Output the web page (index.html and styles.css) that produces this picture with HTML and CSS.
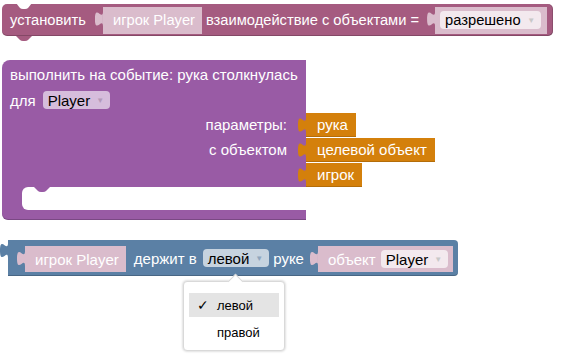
FILE: index.html
```html
<!DOCTYPE html>
<html lang="ru">
<head>
  <meta charset="UTF-8" />
  <title>Blockly workspace</title>
  <meta name="viewport" content="width=device-width, initial-scale=1.0"/>
  <link rel="stylesheet" href="styles.css">
</head>
<body>
  <div class="workspace">

    <div class="block set-block">
      <span class="label first">установить</span>
      <span class="value pink player-val">игрок Player</span>
      <span class="label">взаимодействие с объектами =</span>
      <span class="value pink allow-val"><span class="dropdown on-pink">разрешено <span class="caret">▼</span></span></span>
    </div>

    <div class="block event-block">
      <div class="event-title">выполнить на событие: рука столкнулась</div>
      <div class="event-for">для <span class="dropdown on-purple">Player <span class="caret">▼</span></span></div>
      <div class="param-row">
        <span class="param-label">параметры:</span>
        <span class="value orange">рука</span>
      </div>
      <div class="param-row">
        <span class="param-label">с объектом</span>
        <span class="value orange">целевой объект</span>
      </div>
      <div class="param-row">
        <span class="param-label"></span>
        <span class="value orange">игрок</span>
      </div>
      <div class="event-slot"></div>
      <div class="event-foot"></div>
    </div>

    <div class="block hold-block">
      <span class="value pink hold-player">игрок Player</span>
      <span class="label">держит в</span>
      <span class="dropdown on-blue">левой <span class="caret">▼</span></span>
      <span class="label">руке</span>
      <span class="value pink object-val">объект <span class="dropdown on-pink">Player <span class="caret">▼</span></span></span>
    </div>

    <div class="menu">
      <div class="menu-item active"><span class="check">✓</span>левой</div>
      <div class="menu-item"><span class="check"></span>правой</div>
    </div>

  </div>
</body>
</html>
```

FILE: styles.css
```css
body { margin: 0; background: #fff; font-family: "Liberation Sans", Arial, sans-serif; }
.workspace { position: relative; width: 562px; height: 354px; overflow: hidden; background: #fff; }

/* blocks sit on a free canvas */
.block { position: absolute; color: #fff; font-size: 15px; box-sizing: border-box; }
.label { white-space: nowrap; }

.value { position: relative; display: inline-flex; align-items: center; box-sizing: border-box; white-space: nowrap; }
.value::before {
  content: "";
  position: absolute;
  left: -8px;
  top: 5px;
  width: 8px;
  height: 15px;
  background: inherit;
  clip-path: path("M8 0 C8 10 0 -8 0 7.5 S8 5 8 15 Z");
}
.pink { background: #dabccc; color: #fff; }
.orange { background: #d4800b; color: #fff; box-shadow: inset 0 -1px 0 rgba(0,0,0,.15); }

.dropdown { display: inline-flex; align-items: center; height: 18px; padding: 0 6px; border-radius: 4px; color: #000; white-space: nowrap; }
.caret { font-size: 8px; color: #c8c8c8; margin-left: 6px; }
.on-pink { background: #f3e9ee; }
.on-purple { background: #d6bddc; }
.on-blue { background: #c6d3df; }
.on-blue .caret { color: #8fa6bd; }
.on-purple .caret { color: #b49aba; }

/* top "set" block */
.set-block {
  left: 2px; top: 4px; height: 32px;
  padding-right: 6px;
  display: flex; align-items: center;
  font-size: 14.7px;
  background: #a55b80;
  border-radius: 5px;
  box-shadow: inset 0 -1px 0 rgba(0,0,0,.2), inset -1px 0 0 rgba(0,0,0,.15);
}
.set-block::before {
  content: "";
  position: absolute;
  left: 14px; top: -1px;
  width: 16px; height: 6px;
  background: #fff;
  clip-path: path("M0 0 L4 5 Q5 6 7 6 H9 Q11 6 12 5 L16 0 Z");
}
.set-block::after {
  content: "";
  position: absolute;
  left: 14px; bottom: -5px;
  width: 16px; height: 5px;
  background: #a55b80;
  clip-path: path("M0 0 L4 4 Q5 5 7 5 H9 Q11 5 12 4 L16 0 Z");
}
.set-block .first { margin-left: 8px; }
.player-val { height: 27px; margin-left: 17px; padding: 0 7px 0 10px; }
.set-block .player-val + .label { margin-left: 4px; }
.set-block .label + .allow-val { margin-left: 16px; }
.allow-val { height: 27px; width: 112px; padding-left: 5px; }
.allow-val .dropdown { width: 101px; box-sizing: border-box; justify-content: space-between; padding-left: 5px; }

/* event block */
.event-block {
  left: 2px; top: 60px; width: 304px;
  background: #995ba5;
  border-radius: 8px 0 0 6px;
  box-shadow: inset 0 -1px 0 rgba(0,0,0,.2);
}
.event-title { height: 28px; line-height: 30px; padding-left: 8px; white-space: nowrap; }
.event-for { height: 24px; display: flex; align-items: center; padding-left: 8px; }
.event-for .dropdown { margin-left: 7px; padding-left: 5px; }
.param-row { display: flex; align-items: center; height: 25px; }
.param-row:last-of-type { margin-bottom: 3px; }
.param-label { width: 285px; flex-shrink: 0; text-align: right; white-space: nowrap; }
.orange { height: 24px; margin-left: 19px; padding: 0 8px 0 11px; flex-shrink: 0; }
.event-slot {
  position: relative;
  margin-left: 20px;
  height: 23px;
  background: #fff;
  border-radius: 6px 0 0 6px;
}
.event-slot::before {
  content: "";
  position: absolute;
  left: 12px; top: 0;
  width: 16px; height: 5px;
  background: #995ba5;
  clip-path: path("M0 0 L4 4 Q5 5 7 5 H9 Q11 5 12 4 L16 0 Z");
}
.event-foot { height: 10px; }

/* hold block */
.hold-block {
  left: 8px; top: 240px; height: 36px;
  padding-right: 5px;
  display: flex; align-items: center;
  background: #5b80a5;
  border-radius: 0 4px 4px 0;
  box-shadow: inset 0 -1px 0 rgba(0,0,0,.2);
}
.hold-block::before {
  content: "";
  position: absolute;
  left: -8px; top: 3px;
  width: 8px; height: 15px;
  background: #5b80a5;
  clip-path: path("M8 0 C8 10 0 -8 0 7.5 S8 5 8 15 Z");
}
.hold-player { height: 26px; margin-left: 17px; padding: 0 7px 0 10px; margin-top: 2px; }
.hold-player + .label { margin-left: 8px; }
.on-blue { margin-left: 6px; padding-left: 5px; }
.on-blue + .label { margin-left: 4px; }
.object-val { height: 26px; margin-left: 14px; padding: 0 5px 0 10px; margin-top: 2px; }
.object-val .dropdown { margin-left: 5px; padding-left: 5px; }

/* dropdown menu overlay */
.menu {
  position: absolute;
  left: 183px; top: 281px;
  width: 102px; height: 70px;
  box-sizing: border-box;
  padding: 11px 5px 0;
  background: #fff;
  border: 1px solid #d9d9d9;
  border-radius: 4px;
  box-shadow: 0 0 2px 1px rgba(0,0,0,.12);
  font-size: 13px;
  color: #000;
}
.menu::before {
  content: "";
  position: absolute;
  left: 46px; top: -6px;
  width: 10px; height: 10px;
  background: #fff;
  border-left: 1px solid #d9d9d9;
  border-top: 1px solid #d9d9d9;
  transform: rotate(45deg);
}
.menu-item { position: relative; display: flex; align-items: center; height: 24px; padding-left: 8px; }
.menu-item + .menu-item { margin-top: 3px; }
.menu-item.active { background: #e4e4e4; }
.check { width: 20px; font-size: 14px; }
```
